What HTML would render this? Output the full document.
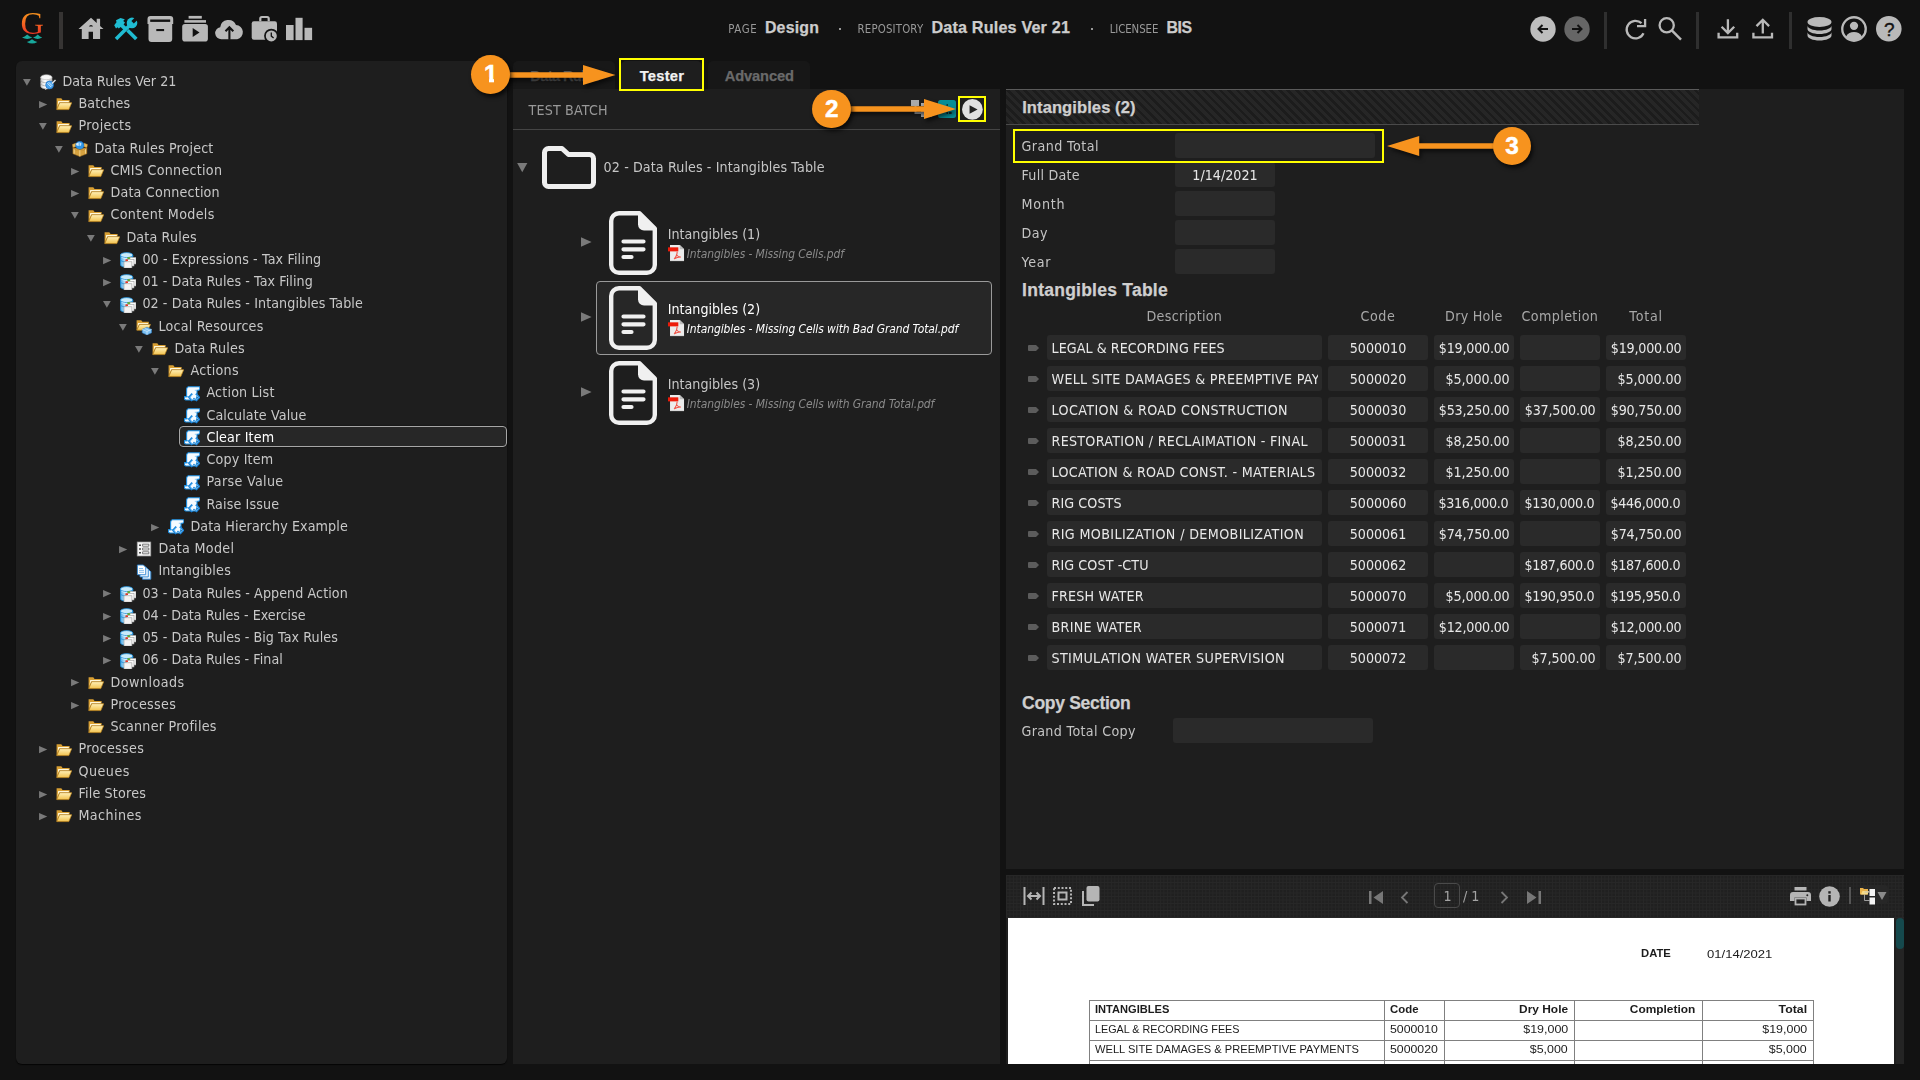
<!DOCTYPE html>
<html lang="en"><head><meta charset="utf-8"><title>Design - Data Rules Ver 21</title>
<style>
*{box-sizing:border-box;margin:0;padding:0}
html,body{width:1920px;height:1080px;overflow:hidden;background:#121212}
body{font-family:"DejaVu Sans","Liberation Sans",sans-serif;font-size:12.75px;color:#bbb;position:relative}
.abs{position:absolute}
.t{position:absolute;white-space:pre;line-height:1}
.n{transform:scaleY(1.1136)}
.i{font-style:italic}
.b{font-family:"Liberation Sans","DejaVu Sans",sans-serif;font-weight:bold;-webkit-text-stroke:.25px currentColor}
.panel{position:absolute;background:#1e1e1e}
.inp{position:absolute;background:#2a2a2a;border-radius:3px;height:25px;padding:0 4.5px;color:#e8e8e8;font-size:12.75px;line-height:26px;white-space:pre}
.inp>div{overflow:hidden;height:25px;padding-top:1px}
.inp span{display:inline-block;transform:scaleY(1.1136);transform-origin:50% 67%}
.c{text-align:center}
.r{text-align:right}
.l{text-align:left}
.circ{position:absolute;width:38px;height:38px;border-radius:50%;background:#f7931e;box-shadow:2px 3px 4px rgba(0,0,0,.7);color:#fff;text-align:center;font-family:"Liberation Sans","DejaVu Sans",sans-serif;font-weight:bold;-webkit-text-stroke:.5px #fff}
.ybox{position:absolute;border:2.5px solid #ffff00}
svg{position:absolute;overflow:visible}
.doc{font-family:"Liberation Sans",sans-serif;color:#1c1c1c;position:absolute;white-space:pre;line-height:1;font-size:11.7px}
</style></head>
<body>

<svg width="0" height="0" style="position:absolute"><defs>
<linearGradient id="gf" x1="0" y1="0" x2="0" y2="1"><stop offset="0" stop-color="#fff1b8"/><stop offset="1" stop-color="#f2c24e"/></linearGradient>
<linearGradient id="gc" x1="0" y1="0" x2="1" y2="0"><stop offset="0" stop-color="#4fa9e6"/><stop offset=".4" stop-color="#bde4f8"/><stop offset="1" stop-color="#4fa9e6"/></linearGradient>
<linearGradient id="gd" x1="0" y1="0" x2="1" y2="0"><stop offset="0" stop-color="#cfcfcf"/><stop offset=".4" stop-color="#ffffff"/><stop offset="1" stop-color="#bdbdbd"/></linearGradient>
<symbol id="i-folder" viewBox="0 0 16 16"><path d="M.6 2.300h4.700l1.300 1.600h7v2.600H3.600L.9 13.400H.6z" fill="#d89f33"/><path d="M2.200 5h10.600v1.500H3.200L1.600 10z" fill="#fff8dc"/><path d="M.8 13.600 3.700 6.700h12l-2.900 6.900z" fill="url(#gf)" stroke="#c48a1e" stroke-width=".7" stroke-linejoin="round"/></symbol>
<symbol id="i-db" viewBox="0 0 16 16"><path d="M.8 3.200v9.200c0 1.400 2.500 2.500 5.600 2.500s5.600-1.100 5.600-2.500V3.200z" fill="url(#gd)" stroke="#a9a9a9" stroke-width=".6"/><ellipse cx="6.400" cy="3.200" rx="5.600" ry="2.500" fill="#f7f7f7" stroke="#b5b5b5" stroke-width=".6"/><path d="M.8 6.300c0 1.400 2.500 2.500 5.600 2.500s5.600-1.100 5.600-2.500M.8 9.400c0 1.400 2.500 2.500 5.600 2.500s5.600-1.100 5.600-2.500" fill="none" stroke="#a0a0a0" stroke-width=".7"/><circle cx="9.600" cy="11" r="3.900" fill="#4aa5ee" stroke="#1f73c8" stroke-width=".7"/><path d="M7.400 9.200l3.800 3.800M8.600 8.200l3.600 3.600" stroke="#e3f2fe" stroke-width=".9"/><path d="M12 9.500 15.500 6" stroke="#e2e2e2" stroke-width="1.400"/><path d="M7 14.200 5.400 15.800" stroke="#dadada" stroke-width="1"/></symbol>
<symbol id="i-box" viewBox="0 0 16 16"><path d="M.900 6.600.200 3.500 3.800 2.100l1.100 3.300zM14.900 6.600l.700-3.100L12 2.100l-1.100 3.300z" fill="#e9b857" stroke="#a06f1f" stroke-width=".4"/><path d="M.900 6.600 7.800 8.600l7.100-2v6.200L7.800 15.600.900 12.800z" fill="#d6a240" stroke="#9a6a1c" stroke-width=".5" stroke-linejoin="round"/><path d="M2.200 8.200v4.400M13.500 8.200v4.400" stroke="#f3dba3" stroke-width=".8"/><path d="M7.800 8.800v6.600" stroke="#f0cf85" stroke-width="1"/><circle cx="7.800" cy="4.400" r="4.200" fill="#2e95e6" stroke="#1668b8" stroke-width=".5"/><ellipse cx="7" cy="3.200" rx="2.900" ry="1.700" fill="#e3f3ff" opacity=".9"/><path d="M7.200 2v4.600M9.200 2.400l.6 4" stroke="#2e95e6" stroke-width=".8"/><path d="M.900 6.600 4 9l3.800-.4 3.900.4 3.200-2.400-3.100 1-4 1-4-1z" fill="#e3b250" stroke="#9a6a1c" stroke-width=".4"/></symbol>
<symbol id="i-cm" viewBox="0 0 16 16"><path d="M.400 3v9.800c0 1.300 2.800 2.400 6.200 2.400s6.200-1.100 6.200-2.400V3z" fill="url(#gc)" stroke="#1a8bd8" stroke-width=".8"/><ellipse cx="6.600" cy="3.100" rx="6.200" ry="2.500" fill="#c9ebfb" stroke="#1a8bd8" stroke-width=".8"/><path d="M.400 7.600c0 1.300 2.800 2.400 6.200 2.400" fill="none" stroke="#1a8bd8" stroke-width=".8"/><path d="M1.600 5.200c1 .8 3 1.200 5 1.200s4-.4 5-1.200" fill="none" stroke="#eaf7ff" stroke-width=".8"/><rect x="8.200" y="5.400" width="7.800" height="6.600" fill="#fbfbfb" stroke="#9a9a9a" stroke-width=".6"/><rect x="6.200" y="7.500" width="7.800" height="6.500" fill="#fbfbfb" stroke="#9a9a9a" stroke-width=".6"/><rect x="4" y="9.800" width="7.900" height="6.300" fill="#f4f4f4" stroke="#9a9a9a" stroke-width=".6"/><path d="M5.400 8.200h2.600" stroke="#e8301f" stroke-width="1.500"/><path d="M7.400 6.100h2.800" stroke="#4aa516" stroke-width="1.500"/></symbol>
<symbol id="i-lres" viewBox="0 0 16 16"><path d="M.6 1.300h4.600l1.200 1.500h6.400v2.400H3.400L.9 11H.6z" fill="#d89f33"/><path d="M2 3.900h10v1.400H3L1.500 8.600z" fill="#fff8dc"/><path d="M.8 11.200 3.500 5.400h11l-2.700 5.800z" fill="url(#gf)" stroke="#c48a1e" stroke-width=".7" stroke-linejoin="round"/><path d="M6.200 10.400 11 8.200l4.600 2.200v3.400L11 16l-4.800-2.200z" fill="#7cc0f3" stroke="#2b7cc2" stroke-width=".6" stroke-linejoin="round"/><path d="M6.200 10.400 11 12.500l4.600-2.100M11 12.500V16M8.600 9.300l4.700 2.200" fill="none" stroke="#e2f1fd" stroke-width=".6"/></symbol>
<symbol id="i-script" viewBox="0 0 16 16"><path d="M4.200.700h11.300c.900 1.600.300 3.200-1.200 3.600H13v6.200L11.600 14H1.800C.500 13.500.100 12 .600 10.600h2V3.600C2.600 2 3.200 1.100 4.200.700z" fill="#f6fbff" stroke="#1b8de0" stroke-width="1.100" stroke-linejoin="round"/><path d="M.800 10.800h5.400" stroke="#1b8de0" stroke-width=".9"/><path d="M13 4.300h-2.200" stroke="#7cc3f5" stroke-width=".8"/><path d="M8.200 7.600 5.100 11.300l3.100 3.700M11.900 7.600l3.200 3.700-3.200 3.700" fill="none" stroke="#1d86dc" stroke-width="1.900" stroke-linejoin="round"/><path d="M8.200 8.600 6 11.300l2.200 2.700M11.900 8.600l2.300 2.700-2.300 2.700" fill="none" stroke="#8fd3ff" stroke-width=".7"/><circle cx="10" cy="12.600" r=".9" fill="#1d86dc"/></symbol>
<symbol id="i-dm" viewBox="0 0 16 16"><rect x="1.200" y="1" width="13.600" height="14" fill="#f6f6f6" stroke="#9a9a9a" stroke-width=".7"/><path d="M3 4.200h2M3 8h2M3 11.800h2" stroke="#4a4a4a" stroke-width="1.400"/><path d="M6.600 3.200h6.200v2H6.600zM6.600 7h6.200v2H6.600zM6.600 10.800h6.200v2H6.600z" fill="#fff" stroke="#5a5a5a" stroke-width=".8"/></symbol>
<symbol id="i-docs" viewBox="0 0 16 16"><path d="M6.500 5.500h6l2.300 2.300v7.400H6.500z" fill="#e8f3fc" stroke="#2f86d2" stroke-width=".9"/><path d="M4 3.200h6l2.300 2.300v7.400H4z" fill="#e8f3fc" stroke="#2f86d2" stroke-width=".9"/><path d="M1.400 1h6l2.300 2.300v7.400H1.400z" fill="#fff" stroke="#2f86d2" stroke-width=".9"/><path d="M3 4.500h4M3 6.400h5M3 8.300h5" stroke="#6aaee6" stroke-width=".8"/></symbol>
<symbol id="i-pdf" viewBox="0 0 16 16"><path d="M2 0h9.600L16 4.200V16H2z" fill="#ececec"/><path d="M2.300 15.700H16" stroke="#bdbdbd" stroke-width=".6"/><path d="M11.600 0v4.200H16z" fill="#bcbcbc"/><rect x="0" y="2.300" width="10.200" height="4" fill="#ee1c0a"/><path d="M6.300 13.600c1.900-2.300 2.800-4.600 2.700-6.600M8.400 9.600c.9 1.300 2.200 2.100 4 2.300M12.400 11.900c-2.200.1-4.300.700-6.100 1.700" fill="none" stroke="#f0564a" stroke-width="1.100" stroke-linecap="round"/></symbol>
<symbol id="i-docbig" viewBox="0 0 48 64"><path d="M10 2.200h20.500L45.800 17.500V54a7.800 7.800 0 0 1-7.800 7.800H10A7.800 7.800 0 0 1 2.200 54V10A7.800 7.800 0 0 1 10 2.200z" fill="none" stroke="#f0f0f0" stroke-width="4.400" stroke-linejoin="round"/><path d="M29 2.500 46 19.500H35a6 6 0 0 1-6-6z" fill="#f0f0f0"/><path d="M14.500 30.500h20M14.500 38.300h20M14.500 46h8" stroke="#f0f0f0" stroke-width="4.200" stroke-linecap="round"/></symbol>
</defs></svg>

<div class="t" style="left:20.500px;top:7.400px;font-family:'Liberation Serif',serif;font-size:32.500px;color:#f47a20;background:linear-gradient(180deg,#f7941d 18%,#ee3a24 78%);-webkit-background-clip:text;background-clip:text;-webkit-text-fill-color:transparent">G</div>
<svg style="left:0;top:0" width="60" height="50" viewBox="0 0 60 50"><path d="M22 37.600Q24.800 36.800 27.200 34.500 29.600 36.800 32.300 37.600 27.200 40.300 22 37.600zM33 37.600Q35.600 36.800 37.700 34.500 39.900 36.800 42.200 37.600 37.600 40.300 33 37.600zM26.800 42Q29.600 41.400 32 39.200 34.500 41.400 37.400 42 32.100 45 26.800 42z" fill="#18a89c"/></svg>
<div class="abs" style="left:59px;top:12px;width:3.500px;height:37px;background:#363433"></div>
<svg style="left:0;top:0" width="330" height="60" viewBox="0 0 330 60">
<path d="M91 17.800 96.700 22.900V18.800h3.400v7.100L103.500 29h-3.400v10.100H93V31.700h-4.400v7.400H81.800V29H78.500z" fill="#b9b9b9"/>
<path d="M88.900 26.600a2.200 2.200 0 0 1 4.200 0z" fill="#121212"/>
<g fill="none" stroke="#1fbcd2" stroke-width="3.600"><path d="M129.500 25.500 116 39"/><path d="M127.500 30.200 136.300 39"/></g>
<circle cx="132" cy="22.900" r="5.300" fill="#1fbcd2"/><path d="M132.600 22.300 138.500 16.400" stroke="#121212" stroke-width="3.500"/>
<path d="M114.200 25.300 116.500 22.200 116 20.200 120.500 17.900 124.800 19.300 123.200 21 125 22.600 123.600 24.400 126.600 27.300 123.800 30.100 120.600 27 118.800 28.600 117.600 27.200 116 28.400z" fill="#1fbcd2"/>
<path d="M147.500 19a3 3 0 0 1 3-3h19.700a3 3 0 0 1 3 3v5h-1v15a3 3 0 0 1-3 3h-17.700a3 3 0 0 1-3-3V24h-1z" fill="#b9b9b9"/>
<rect x="150.200" y="19.500" width="20" height="2.400" fill="#121212"/><rect x="156.300" y="29" width="7.800" height="2.100" fill="#121212"/>
<rect x="188.600" y="15.900" width="13.200" height="2.700" fill="#b9b9b9"/><rect x="184.400" y="20.100" width="21.600" height="2.600" fill="#b9b9b9"/>
<rect x="182.200" y="23.900" width="25.700" height="17.700" rx="2.800" fill="#b9b9b9"/><path d="M192.700 28 199.500 32.550 192.700 37.100z" fill="#121212"/>
<path d="M221.500 39.300a6.100 6.100 0 0 1-1.300-12.100 8.300 8.300 0 0 1 15.800-2.300 7.300 7.300 0 0 1 1.200 14.400z" fill="#b9b9b9"/>
<path d="M229.400 39.800V27.500M225.500 31.200l3.900-3.900 3.900 3.900" fill="none" stroke="#121212" stroke-width="2.100"/>
<path d="M260.300 21.200v-2.600a1.600 1.600 0 0 1 1.600-1.600h5.200a1.600 1.600 0 0 1 1.600 1.600v2.600" fill="none" stroke="#b9b9b9" stroke-width="2.200"/>
<rect x="251.700" y="21.200" width="25.300" height="18.500" rx="2.200" fill="#b9b9b9"/>
<circle cx="271.300" cy="35.900" r="7.200" fill="#121212"/><circle cx="271.300" cy="35.900" r="5.500" fill="#b9b9b9"/>
<path d="M271.300 32.400v3.700l2.300 1.900" fill="none" stroke="#121212" stroke-width="1.300"/>
<rect x="286" y="25" width="7.600" height="15.100" fill="#b9b9b9"/><rect x="295.500" y="17.800" width="7.100" height="22.300" fill="#b9b9b9"/><rect x="304.500" y="27.800" width="7.600" height="12.300" fill="#b9b9b9"/>
</svg>
<div id="f1" class="t n" style="left:728.20px;top:25.28px;font-size:10.237px;color:#999;transform-origin:0 8.62px;letter-spacing:0.632px;">PAGE</div>
<div id="f2" class="t b" style="left:764.90px;top:20.45px;font-size:15.9px;color:#ccc;letter-spacing:0.223px;">Design</div>
<div class="abs" style="left:839px;top:28px;width:2px;height:2px;background:#999"></div>
<div id="f3" class="t n" style="left:857.50px;top:25.28px;font-size:10.237px;color:#999;transform-origin:0 8.62px;letter-spacing:0.161px;">REPOSITORY</div>
<div id="f4" class="t b" style="left:931.50px;top:18.80px;font-size:16.2px;color:#ccc;letter-spacing:0.158px;">Data Rules Ver 21</div>
<div class="abs" style="left:1091px;top:28px;width:2px;height:2px;background:#999"></div>
<div id="f5" class="t n" style="left:1109.70px;top:25.28px;font-size:10.237px;color:#999;transform-origin:0 8.62px;letter-spacing:-0.092px;">LICENSEE</div>
<div id="f6" class="t b" style="left:1166.40px;top:20.45px;font-size:15.9px;color:#ccc;letter-spacing:-0.400px;">BIS</div>
<svg style="left:1530px;top:16px" width="26" height="26" viewBox="0 0 26 26"><circle cx="13" cy="13" r="12.700" fill="#bdbdbd"/><path d="M18 13H8.500M12.500 9l-4 4 4 4" fill="none" stroke="#121212" stroke-width="2"/></svg>
<svg style="left:1564px;top:16px" width="26" height="26" viewBox="0 0 26 26"><circle cx="13" cy="13" r="12.700" fill="#666"/><path d="M8 13h9.500M13.500 9l4 4-4 4" fill="none" stroke="#121212" stroke-width="2"/></svg>
<div class="abs" style="left:1604px;top:12px;width:3px;height:37px;background:#2f2f2f"></div>
<div class="abs" style="left:1696px;top:12px;width:3px;height:37px;background:#2f2f2f"></div>
<div class="abs" style="left:1789px;top:12px;width:3px;height:37px;background:#2f2f2f"></div>
<svg style="left:1600px;top:0" width="200" height="60" viewBox="1600 0 200 60"><g fill="none" stroke="#b9b9b9" stroke-width="2.300">
<path d="M1643.500 33.200A8.800 8.800 0 1 1 1641.500 23.200"/><path d="M1637 26.100H1645.100V19"/>
<circle cx="1666.700" cy="25.300" r="7.100"/><path d="M1671.800 30.400 1681 39.600" stroke-width="2.500"/>
<path d="M1727.900 19.200V33M1721.600 26.800l6.300 6.300 6.300-6.300M1718.600 32.800v4.600h18.600v-4.600"/>
<path d="M1762.800 33.600V20.200M1756.500 26.100l6.300-6.300 6.300 6.300M1753.400 32.800v4.600h18.600v-4.600"/>
</g></svg>
<svg style="left:1807px;top:17px" width="25" height="24" viewBox="0 0 25 24"><ellipse cx="12.500" cy="5" rx="12" ry="5" fill="#b9b9b9"/><path d="M.5 8.500c0 2.800 5.400 5 12 5s12-2.200 12-5v3.500c0 2.800-5.400 5-12 5s-12-2.200-12-5z" fill="#b9b9b9"/><path d="M.5 15c0 2.800 5.400 5 12 5s12-2.200 12-5v3.500c0 2.800-5.400 5-12 5s-12-2.200-12-5z" fill="#b9b9b9"/></svg>
<svg style="left:1841.400px;top:16px" width="26" height="26" viewBox="0 0 27 27"><circle cx="13.500" cy="13.500" r="12.200" fill="none" stroke="#b9b9b9" stroke-width="2.400"/><circle cx="13.500" cy="10.200" r="4.300" fill="#b9b9b9"/><path d="M5 21.500c2-3.600 5-4.800 8.500-4.800s6.500 1.200 8.500 4.800c-2.200 2.600-5 4-8.500 4s-6.300-1.400-8.500-4z" fill="#b9b9b9"/></svg>
<svg style="left:1876.200px;top:16.200px" width="25.600" height="25.600" viewBox="0 0 27 27"><circle cx="13.500" cy="13.500" r="13.500" fill="#b9b9b9"/></svg>
<div class="t" style="left:1883.900px;top:19.600px;font-family:'Liberation Sans',sans-serif;font-size:19px;color:#121212;-webkit-text-stroke:.35px #121212">?</div>
<div class="panel" style="left:16px;top:61px;width:491px;height:1003px;border-radius:6px;box-shadow:0 1px 1px #050505"></div>
<svg style="left:23.2px;top:78.90px" width="7.800" height="6.800" viewBox="0 0 8 7"><path d="M0 0h8L4 7z" fill="#7a7a7a"/></svg>
<svg style="left:40px;top:74.00px" width="16" height="16"><use href="#i-db"/></svg>
<div id="f7" class="t n" style="left:62.40px;top:76.02px;font-size:12.752px;color:#c8c8c8;transform-origin:0 10.88px;letter-spacing:-0.003px;">Data Rules Ver 21</div>
<svg style="left:38.8px;top:100.75px" width="8.300" height="7.200" viewBox="0 0 8 7"><path d="M0 0 8 3.500 0 7z" fill="#7a7a7a"/></svg>
<svg style="left:56px;top:96.25px" width="16" height="16"><use href="#i-folder"/></svg>
<div id="f8" class="t n" style="left:78.40px;top:98.02px;font-size:12.752px;color:#c8c8c8;transform-origin:0 10.88px;letter-spacing:0.110px;">Batches</div>
<svg style="left:39.2px;top:123.40px" width="7.800" height="6.800" viewBox="0 0 8 7"><path d="M0 0h8L4 7z" fill="#7a7a7a"/></svg>
<svg style="left:56px;top:118.50px" width="16" height="16"><use href="#i-folder"/></svg>
<div id="f9" class="t n" style="left:78.40px;top:120.02px;font-size:12.752px;color:#c8c8c8;transform-origin:0 10.88px;letter-spacing:0.348px;">Projects</div>
<svg style="left:55.2px;top:145.65px" width="7.800" height="6.800" viewBox="0 0 8 7"><path d="M0 0h8L4 7z" fill="#7a7a7a"/></svg>
<svg style="left:72px;top:140.75px" width="16" height="16"><use href="#i-box"/></svg>
<div id="f10" class="t n" style="left:94.40px;top:143.02px;font-size:12.752px;color:#c8c8c8;transform-origin:0 10.88px;letter-spacing:0.142px;">Data Rules Project</div>
<svg style="left:70.8px;top:167.50px" width="8.300" height="7.200" viewBox="0 0 8 7"><path d="M0 0 8 3.500 0 7z" fill="#7a7a7a"/></svg>
<svg style="left:88px;top:163.00px" width="16" height="16"><use href="#i-folder"/></svg>
<div id="f11" class="t n" style="left:110.40px;top:165.02px;font-size:12.752px;color:#c8c8c8;transform-origin:0 10.88px;letter-spacing:0.260px;">CMIS Connection</div>
<svg style="left:70.8px;top:189.75px" width="8.300" height="7.200" viewBox="0 0 8 7"><path d="M0 0 8 3.500 0 7z" fill="#7a7a7a"/></svg>
<svg style="left:88px;top:185.25px" width="16" height="16"><use href="#i-folder"/></svg>
<div id="f12" class="t n" style="left:110.40px;top:187.02px;font-size:12.752px;color:#c8c8c8;transform-origin:0 10.88px;letter-spacing:0.190px;">Data Connection</div>
<svg style="left:71.2px;top:212.40px" width="7.800" height="6.800" viewBox="0 0 8 7"><path d="M0 0h8L4 7z" fill="#7a7a7a"/></svg>
<svg style="left:88px;top:207.50px" width="16" height="16"><use href="#i-folder"/></svg>
<div id="f13" class="t n" style="left:110.40px;top:209.02px;font-size:12.752px;color:#c8c8c8;transform-origin:0 10.88px;letter-spacing:0.332px;">Content Models</div>
<svg style="left:87.2px;top:234.65px" width="7.800" height="6.800" viewBox="0 0 8 7"><path d="M0 0h8L4 7z" fill="#7a7a7a"/></svg>
<svg style="left:104px;top:229.75px" width="16" height="16"><use href="#i-folder"/></svg>
<div id="f14" class="t n" style="left:126.40px;top:232.02px;font-size:12.752px;color:#c8c8c8;transform-origin:0 10.88px;letter-spacing:0.144px;">Data Rules</div>
<svg style="left:102.8px;top:256.50px" width="8.300" height="7.200" viewBox="0 0 8 7"><path d="M0 0 8 3.500 0 7z" fill="#7a7a7a"/></svg>
<svg style="left:120px;top:252.00px" width="16" height="16"><use href="#i-cm"/></svg>
<div id="f15" class="t n" style="left:142.40px;top:254.02px;font-size:12.752px;color:#c8c8c8;transform-origin:0 10.88px;letter-spacing:0.107px;">00 - Expressions - Tax Filing</div>
<svg style="left:102.8px;top:278.75px" width="8.300" height="7.200" viewBox="0 0 8 7"><path d="M0 0 8 3.500 0 7z" fill="#7a7a7a"/></svg>
<svg style="left:120px;top:274.25px" width="16" height="16"><use href="#i-cm"/></svg>
<div id="f16" class="t n" style="left:142.40px;top:276.02px;font-size:12.752px;color:#c8c8c8;transform-origin:0 10.88px;letter-spacing:0.058px;">01 - Data Rules - Tax Filing</div>
<svg style="left:103.2px;top:301.40px" width="7.800" height="6.800" viewBox="0 0 8 7"><path d="M0 0h8L4 7z" fill="#7a7a7a"/></svg>
<svg style="left:120px;top:296.50px" width="16" height="16"><use href="#i-cm"/></svg>
<div id="f17" class="t n" style="left:142.40px;top:298.02px;font-size:12.752px;color:#c8c8c8;transform-origin:0 10.88px;letter-spacing:0.069px;">02 - Data Rules - Intangibles Table</div>
<svg style="left:119.2px;top:323.65px" width="7.800" height="6.800" viewBox="0 0 8 7"><path d="M0 0h8L4 7z" fill="#7a7a7a"/></svg>
<svg style="left:136px;top:318.75px" width="16" height="16"><use href="#i-lres"/></svg>
<div id="f18" class="t n" style="left:158.40px;top:321.02px;font-size:12.752px;color:#c8c8c8;transform-origin:0 10.88px;letter-spacing:0.192px;">Local Resources</div>
<svg style="left:135.2px;top:345.90px" width="7.800" height="6.800" viewBox="0 0 8 7"><path d="M0 0h8L4 7z" fill="#7a7a7a"/></svg>
<svg style="left:152px;top:341.00px" width="16" height="16"><use href="#i-folder"/></svg>
<div id="f19" class="t n" style="left:174.40px;top:343.02px;font-size:12.752px;color:#c8c8c8;transform-origin:0 10.88px;letter-spacing:0.144px;">Data Rules</div>
<svg style="left:151.2px;top:368.15px" width="7.800" height="6.800" viewBox="0 0 8 7"><path d="M0 0h8L4 7z" fill="#7a7a7a"/></svg>
<svg style="left:168px;top:363.25px" width="16" height="16"><use href="#i-folder"/></svg>
<div id="f20" class="t n" style="left:190.40px;top:365.02px;font-size:12.752px;color:#c8c8c8;transform-origin:0 10.88px;letter-spacing:0.270px;">Actions</div>
<svg style="left:184px;top:385.50px" width="16" height="16"><use href="#i-script"/></svg>
<div id="f21" class="t n" style="left:206.40px;top:387.02px;font-size:12.752px;color:#c8c8c8;transform-origin:0 10.88px;letter-spacing:0.172px;">Action List</div>
<svg style="left:184px;top:407.75px" width="16" height="16"><use href="#i-script"/></svg>
<div id="f22" class="t n" style="left:206.40px;top:410.02px;font-size:12.752px;color:#c8c8c8;transform-origin:0 10.88px;letter-spacing:0.091px;">Calculate Value</div>
<div class="abs" style="left:179px;top:426px;width:328px;height:21px;border:1px solid #a6a6a6;border-radius:4px;background:#272727;box-shadow:0 0 1.500px #000"></div>
<svg style="left:184px;top:430.00px" width="16" height="16"><use href="#i-script"/></svg>
<div id="f23" class="t n" style="left:206.40px;top:432.02px;font-size:12.752px;color:#fff;transform-origin:0 10.88px;letter-spacing:0.142px;">Clear Item</div>
<svg style="left:184px;top:452.25px" width="16" height="16"><use href="#i-script"/></svg>
<div id="f24" class="t n" style="left:206.40px;top:454.02px;font-size:12.752px;color:#c8c8c8;transform-origin:0 10.88px;letter-spacing:0.172px;">Copy Item</div>
<svg style="left:184px;top:474.50px" width="16" height="16"><use href="#i-script"/></svg>
<div id="f25" class="t n" style="left:206.40px;top:476.02px;font-size:12.752px;color:#c8c8c8;transform-origin:0 10.88px;letter-spacing:0.307px;">Parse Value</div>
<svg style="left:184px;top:496.75px" width="16" height="16"><use href="#i-script"/></svg>
<div id="f26" class="t n" style="left:206.40px;top:499.02px;font-size:12.752px;color:#c8c8c8;transform-origin:0 10.88px;letter-spacing:0.125px;">Raise Issue</div>
<svg style="left:150.8px;top:523.50px" width="8.300" height="7.200" viewBox="0 0 8 7"><path d="M0 0 8 3.500 0 7z" fill="#7a7a7a"/></svg>
<svg style="left:168px;top:519.00px" width="16" height="16"><use href="#i-script"/></svg>
<div id="f27" class="t n" style="left:190.40px;top:521.02px;font-size:12.752px;color:#c8c8c8;transform-origin:0 10.88px;letter-spacing:0.090px;">Data Hierarchy Example</div>
<svg style="left:118.8px;top:545.75px" width="8.300" height="7.200" viewBox="0 0 8 7"><path d="M0 0 8 3.500 0 7z" fill="#7a7a7a"/></svg>
<svg style="left:136px;top:541.25px" width="16" height="16"><use href="#i-dm"/></svg>
<div id="f28" class="t n" style="left:158.40px;top:543.02px;font-size:12.752px;color:#c8c8c8;transform-origin:0 10.88px;letter-spacing:0.324px;">Data Model</div>
<svg style="left:136px;top:563.50px" width="16" height="16"><use href="#i-docs"/></svg>
<div id="f29" class="t n" style="left:158.40px;top:565.02px;font-size:12.752px;color:#c8c8c8;transform-origin:0 10.88px;letter-spacing:0.190px;">Intangibles</div>
<svg style="left:102.8px;top:590.25px" width="8.300" height="7.200" viewBox="0 0 8 7"><path d="M0 0 8 3.500 0 7z" fill="#7a7a7a"/></svg>
<svg style="left:120px;top:585.75px" width="16" height="16"><use href="#i-cm"/></svg>
<div id="f30" class="t n" style="left:142.40px;top:588.02px;font-size:12.752px;color:#c8c8c8;transform-origin:0 10.88px;letter-spacing:0.065px;">03 - Data Rules - Append Action</div>
<svg style="left:102.8px;top:612.50px" width="8.300" height="7.200" viewBox="0 0 8 7"><path d="M0 0 8 3.500 0 7z" fill="#7a7a7a"/></svg>
<svg style="left:120px;top:608.00px" width="16" height="16"><use href="#i-cm"/></svg>
<div id="f31" class="t n" style="left:142.40px;top:610.02px;font-size:12.752px;color:#c8c8c8;transform-origin:0 10.88px;letter-spacing:-0.016px;">04 - Data Rules - Exercise</div>
<svg style="left:102.8px;top:634.75px" width="8.300" height="7.200" viewBox="0 0 8 7"><path d="M0 0 8 3.500 0 7z" fill="#7a7a7a"/></svg>
<svg style="left:120px;top:630.25px" width="16" height="16"><use href="#i-cm"/></svg>
<div id="f32" class="t n" style="left:142.40px;top:632.02px;font-size:12.752px;color:#c8c8c8;transform-origin:0 10.88px;letter-spacing:0.032px;">05 - Data Rules - Big Tax Rules</div>
<svg style="left:102.8px;top:657.00px" width="8.300" height="7.200" viewBox="0 0 8 7"><path d="M0 0 8 3.500 0 7z" fill="#7a7a7a"/></svg>
<svg style="left:120px;top:652.50px" width="16" height="16"><use href="#i-cm"/></svg>
<div id="f33" class="t n" style="left:142.40px;top:654.02px;font-size:12.752px;color:#c8c8c8;transform-origin:0 10.88px;letter-spacing:0.022px;">06 - Data Rules - Final</div>
<svg style="left:70.8px;top:679.25px" width="8.300" height="7.200" viewBox="0 0 8 7"><path d="M0 0 8 3.500 0 7z" fill="#7a7a7a"/></svg>
<svg style="left:88px;top:674.75px" width="16" height="16"><use href="#i-folder"/></svg>
<div id="f34" class="t n" style="left:110.40px;top:677.02px;font-size:12.752px;color:#c8c8c8;transform-origin:0 10.88px;letter-spacing:0.471px;">Downloads</div>
<svg style="left:70.8px;top:701.50px" width="8.300" height="7.200" viewBox="0 0 8 7"><path d="M0 0 8 3.500 0 7z" fill="#7a7a7a"/></svg>
<svg style="left:88px;top:697.00px" width="16" height="16"><use href="#i-folder"/></svg>
<div id="f35" class="t n" style="left:110.40px;top:699.02px;font-size:12.752px;color:#c8c8c8;transform-origin:0 10.88px;letter-spacing:0.318px;">Processes</div>
<svg style="left:88px;top:719.25px" width="16" height="16"><use href="#i-folder"/></svg>
<div id="f36" class="t n" style="left:110.40px;top:721.02px;font-size:12.752px;color:#c8c8c8;transform-origin:0 10.88px;letter-spacing:0.232px;">Scanner Profiles</div>
<svg style="left:38.8px;top:746.00px" width="8.300" height="7.200" viewBox="0 0 8 7"><path d="M0 0 8 3.500 0 7z" fill="#7a7a7a"/></svg>
<svg style="left:56px;top:741.50px" width="16" height="16"><use href="#i-folder"/></svg>
<div id="f37" class="t n" style="left:78.40px;top:743.02px;font-size:12.752px;color:#c8c8c8;transform-origin:0 10.88px;letter-spacing:0.318px;">Processes</div>
<svg style="left:56px;top:763.75px" width="16" height="16"><use href="#i-folder"/></svg>
<div id="f38" class="t n" style="left:78.40px;top:766.02px;font-size:12.752px;color:#c8c8c8;transform-origin:0 10.88px;letter-spacing:0.494px;">Queues</div>
<svg style="left:38.8px;top:790.50px" width="8.300" height="7.200" viewBox="0 0 8 7"><path d="M0 0 8 3.500 0 7z" fill="#7a7a7a"/></svg>
<svg style="left:56px;top:786.00px" width="16" height="16"><use href="#i-folder"/></svg>
<div id="f39" class="t n" style="left:78.40px;top:788.02px;font-size:12.752px;color:#c8c8c8;transform-origin:0 10.88px;letter-spacing:0.167px;">File Stores</div>
<svg style="left:38.8px;top:812.75px" width="8.300" height="7.200" viewBox="0 0 8 7"><path d="M0 0 8 3.500 0 7z" fill="#7a7a7a"/></svg>
<svg style="left:56px;top:808.25px" width="16" height="16"><use href="#i-folder"/></svg>
<div id="f40" class="t n" style="left:78.40px;top:810.02px;font-size:12.752px;color:#c8c8c8;transform-origin:0 10.88px;letter-spacing:0.412px;">Machines</div>
<div class="panel" style="left:513px;top:89px;width:487px;height:975px"></div>
<div class="abs" style="left:513px;top:61px;width:102px;height:28px;background:#181818;border-radius:5px 5px 0 0"></div>
<div id="f41" class="t b" style="left:530.30px;top:68.55px;font-size:14.7px;color:#555;letter-spacing:-0.658px;">Data Rules</div>
<div class="abs" style="left:708px;top:61px;width:102px;height:28px;background:#171717;border-radius:5px 5px 0 0"></div>
<div id="f42" class="t b" style="left:724.70px;top:68.55px;font-size:14.7px;color:#6a6a6a;letter-spacing:-0.129px;">Advanced</div>
<div class="abs" style="left:621px;top:61px;width:81px;height:29px;background:#1e1e1e;border-radius:5px 5px 0 0"></div>
<div id="f43" class="t b" style="left:639.70px;top:68.55px;font-size:14.7px;color:#f2f2f2;letter-spacing:0.240px;">Tester</div>
<div class="ybox" style="left:619px;top:57.800px;width:85px;height:33.400px"></div>
<div id="f44" class="t n" style="left:528.60px;top:105.02px;font-size:12.752px;color:#999;transform-origin:0 10.88px;letter-spacing:0.145px;">TEST BATCH</div>
<div class="abs" style="left:513px;top:129px;width:487px;height:1px;background:#454545"></div>
<svg style="left:911px;top:100px" width="21" height="17" viewBox="0 0 21 17"><path d="M0 0h8v6H0zM10 3h5v3h-5zM10 11h11v6H10zM3.500 6v8h6.500v-2H5.500V6z" fill="#a9a9a9"/></svg>
<div class="abs" style="left:938px;top:100px;width:18px;height:18px;background:#078e97;border-radius:2.500px"></div>
<svg style="left:938px;top:100px" width="18" height="18" viewBox="0 0 18 18"><path d="M8.500 4.200h1.500v1.600H8.500zM8.500 12h1.500v2H8.500zM11 12h2.600v2H11z" fill="#0d2a2e"/></svg>
<svg style="left:961.500px;top:98.700px" width="20.800" height="20.800" viewBox="0 0 22 22"><circle cx="11" cy="11" r="11" fill="#e0e0e0"/><path d="M8 6.500 16.500 11 8 15.500z" fill="#222"/></svg>
<div class="ybox" style="left:957.800px;top:95.800px;width:28.400px;height:26.200px"></div>
<svg style="left:516.700px;top:162.800px" width="10.500" height="9.200" viewBox="0 0 10 9"><path d="M0 0h10L5 9z" fill="#7a7a7a"/></svg>
<svg style="left:542px;top:146px" width="54" height="43" viewBox="0 0 54 43"><path d="M2.500 6.500A4 4 0 0 1 6.500 2.500h13.500l6.500 6h21A4 4 0 0 1 51.500 12.500v24A4 4 0 0 1 47.500 40.500h-41A4 4 0 0 1 2.500 36.500z" fill="none" stroke="#efefef" stroke-width="5" stroke-linejoin="round"/></svg>
<div id="f45" class="t n" style="left:603.60px;top:162.02px;font-size:12.752px;color:#c6c6c6;transform-origin:0 10.88px;letter-spacing:0.087px;">02 - Data Rules - Intangibles Table</div>
<svg style="left:580.500px;top:237.1px" width="10.600" height="10.100" viewBox="0 0 11 10"><path d="M0 0 11 5 0 10z" fill="#7a7a7a"/></svg>
<svg style="left:609px;top:211px" width="48" height="64"><use href="#i-docbig"/></svg>
<div id="f46" class="t n" style="left:667.70px;top:229.02px;font-size:12.752px;color:#c8c8c8;transform-origin:0 10.88px;letter-spacing:-0.008px;">Intangibles (1)</div>
<svg style="left:668px;top:244.7px" width="16.200" height="16.200"><use href="#i-pdf"/></svg>
<div id="f47" class="t n i" style="left:686.80px;top:250.01px;font-size:10.776px;color:#8a8a8a;transform-origin:0 8.89px;letter-spacing:-0.108px;">Intangibles - Missing Cells.pdf</div>
<div class="abs" style="left:596px;top:281px;width:396px;height:74.200px;border:1px solid #9a9a9a;border-radius:4px;background:#272727"></div>
<svg style="left:580.500px;top:312.1px" width="10.600" height="10.100" viewBox="0 0 11 10"><path d="M0 0 11 5 0 10z" fill="#7a7a7a"/></svg>
<svg style="left:609px;top:286px" width="48" height="64"><use href="#i-docbig"/></svg>
<div id="f48" class="t n" style="left:667.70px;top:304.02px;font-size:12.752px;color:#fff;transform-origin:0 10.88px;letter-spacing:-0.008px;">Intangibles (2)</div>
<svg style="left:668px;top:319.7px" width="16.200" height="16.200"><use href="#i-pdf"/></svg>
<div id="f49" class="t n i" style="left:686.80px;top:325.01px;font-size:10.776px;color:#fff;transform-origin:0 8.89px;letter-spacing:-0.097px;">Intangibles - Missing Cells with Bad Grand Total.pdf</div>
<svg style="left:580.500px;top:387.1px" width="10.600" height="10.100" viewBox="0 0 11 10"><path d="M0 0 11 5 0 10z" fill="#7a7a7a"/></svg>
<svg style="left:609px;top:361px" width="48" height="64"><use href="#i-docbig"/></svg>
<div id="f50" class="t n" style="left:667.70px;top:379.02px;font-size:12.752px;color:#c8c8c8;transform-origin:0 10.88px;letter-spacing:-0.008px;">Intangibles (3)</div>
<svg style="left:668px;top:394.7px" width="16.200" height="16.200"><use href="#i-pdf"/></svg>
<div id="f51" class="t n i" style="left:686.80px;top:400.01px;font-size:10.776px;color:#8a8a8a;transform-origin:0 8.89px;letter-spacing:-0.098px;">Intangibles - Missing Cells with Grand Total.pdf</div>
<div class="panel" style="left:1006px;top:89px;width:898px;height:780px"></div>
<div class="abs" style="left:1006px;top:89px;width:693px;height:36px;border-top:1px solid #5a5a5a;border-bottom:1px solid #4a4a4a;background:repeating-linear-gradient(45deg,#1c1c1c 0,#1c1c1c 2.600px,#262626 2.600px,#262626 6px)"></div>
<div id="f52" class="t b" style="left:1022.20px;top:100.12px;font-size:16.56px;color:#cfcfcf;letter-spacing:0.081px;">Intangibles (2)</div>
<div id="f53" class="t n" style="left:1021.50px;top:141.02px;font-size:12.752px;color:#c4c4c4;transform-origin:0 10.88px;letter-spacing:0.405px;">Grand Total</div>
<div class="inp c" style="left:1175px;top:133px;width:200px;"></div>
<div id="f54" class="t n" style="left:1021.50px;top:170.02px;font-size:12.752px;color:#c4c4c4;transform-origin:0 10.88px;letter-spacing:0.207px;">Full Date</div>
<div class="inp c" style="left:1175px;top:162px;width:100px;"><div><span>1/14/2021</span></div></div>
<div id="f55" class="t n" style="left:1021.50px;top:199.02px;font-size:12.752px;color:#c4c4c4;transform-origin:0 10.88px;letter-spacing:0.800px;">Month</div>
<div class="inp c" style="left:1175px;top:191px;width:100px;"></div>
<div id="f56" class="t n" style="left:1021.50px;top:228.02px;font-size:12.752px;color:#c4c4c4;transform-origin:0 10.88px;letter-spacing:0.406px;">Day</div>
<div class="inp c" style="left:1175px;top:220px;width:100px;"></div>
<div id="f57" class="t n" style="left:1021.50px;top:257.02px;font-size:12.752px;color:#c4c4c4;transform-origin:0 10.88px;letter-spacing:0.667px;">Year</div>
<div class="inp c" style="left:1175px;top:249px;width:100px;"></div>
<div class="ybox" style="left:1012.900px;top:128.700px;width:371.500px;height:34.300px"></div>
<div id="f58" class="t b" style="left:1022.10px;top:282.15px;font-size:17.5px;color:#cfcfcf;letter-spacing:0.247px;">Intangibles Table</div>
<div id="f59" class="t n" style="left:1146.50px;top:311.02px;font-size:12.752px;color:#a8a8a8;transform-origin:0 10.88px;letter-spacing:0.278px;">Description</div>
<div id="f60" class="t n" style="left:1360.50px;top:311.02px;font-size:12.752px;color:#a8a8a8;transform-origin:0 10.88px;letter-spacing:0.581px;">Code</div>
<div id="f61" class="t n" style="left:1445.10px;top:311.02px;font-size:12.752px;color:#a8a8a8;transform-origin:0 10.88px;letter-spacing:0.252px;">Dry Hole</div>
<div id="f62" class="t n" style="left:1521.50px;top:311.02px;font-size:12.752px;color:#a8a8a8;transform-origin:0 10.88px;letter-spacing:0.374px;">Completion</div>
<div id="f63" class="t n" style="left:1629.25px;top:311.02px;font-size:12.752px;color:#a8a8a8;transform-origin:0 10.88px;letter-spacing:0.780px;">Total</div>
<svg style="left:1027.500px;top:345px" width="11" height="6" viewBox="0 0 11 6"><path d="M1 0h7l3 3-3 3H1a1 1 0 0 1-1-1V1a1 1 0 0 1 1-1z" fill="#5c5c5c"/></svg>
<div class="inp l" style="left:1047px;top:335px;width:275px"><div><span id="f64" style="transform-origin:0 67%;letter-spacing:0.042px;">LEGAL &amp; RECORDING FEES</span></div></div>
<div class="inp c" style="left:1328px;top:335px;width:100px"><div><span id="f65" style="transform-origin:50% 67%;letter-spacing:-0.049px;">5000010</span></div></div>
<div class="inp r" style="left:1434px;top:335px;width:80px"><div><span id="f66" style="transform-origin:100% 67%;letter-spacing:-0.235px;">$19,000.00</span></div></div>
<div class="inp" style="left:1520px;top:335px;width:80px"></div>
<div class="inp r" style="left:1606px;top:335px;width:80px"><div><span id="f67" style="transform-origin:100% 67%;letter-spacing:-0.235px;">$19,000.00</span></div></div>
<svg style="left:1027.500px;top:376px" width="11" height="6" viewBox="0 0 11 6"><path d="M1 0h7l3 3-3 3H1a1 1 0 0 1-1-1V1a1 1 0 0 1 1-1z" fill="#5c5c5c"/></svg>
<div class="inp l" style="left:1047px;top:366px;width:275px"><div><span id="f68" style="transform-origin:0 67%;letter-spacing:0.285px;">WELL SITE DAMAGES &amp; PREEMPTIVE PAYMENTS</span></div></div>
<div class="inp c" style="left:1328px;top:366px;width:100px"><div><span id="f69" style="transform-origin:50% 67%;letter-spacing:-0.049px;">5000020</span></div></div>
<div class="inp r" style="left:1434px;top:366px;width:80px"><div><span id="f70" style="transform-origin:100% 67%;letter-spacing:-0.086px;">$5,000.00</span></div></div>
<div class="inp" style="left:1520px;top:366px;width:80px"></div>
<div class="inp r" style="left:1606px;top:366px;width:80px"><div><span id="f71" style="transform-origin:100% 67%;letter-spacing:-0.086px;">$5,000.00</span></div></div>
<svg style="left:1027.500px;top:407px" width="11" height="6" viewBox="0 0 11 6"><path d="M1 0h7l3 3-3 3H1a1 1 0 0 1-1-1V1a1 1 0 0 1 1-1z" fill="#5c5c5c"/></svg>
<div class="inp l" style="left:1047px;top:397px;width:275px"><div><span id="f72" style="transform-origin:0 67%;letter-spacing:0.362px;">LOCATION &amp; ROAD CONSTRUCTION</span></div></div>
<div class="inp c" style="left:1328px;top:397px;width:100px"><div><span id="f73" style="transform-origin:50% 67%;letter-spacing:-0.049px;">5000030</span></div></div>
<div class="inp r" style="left:1434px;top:397px;width:80px"><div><span id="f74" style="transform-origin:100% 67%;letter-spacing:-0.235px;">$53,250.00</span></div></div>
<div class="inp r" style="left:1520px;top:397px;width:80px"><div><span id="f75" style="transform-origin:100% 67%;letter-spacing:-0.235px;">$37,500.00</span></div></div>
<div class="inp r" style="left:1606px;top:397px;width:80px"><div><span id="f76" style="transform-origin:100% 67%;letter-spacing:-0.235px;">$90,750.00</span></div></div>
<svg style="left:1027.500px;top:438px" width="11" height="6" viewBox="0 0 11 6"><path d="M1 0h7l3 3-3 3H1a1 1 0 0 1-1-1V1a1 1 0 0 1 1-1z" fill="#5c5c5c"/></svg>
<div class="inp l" style="left:1047px;top:428px;width:275px"><div><span id="f77" style="transform-origin:0 67%;letter-spacing:0.268px;">RESTORATION / RECLAIMATION - FINAL</span></div></div>
<div class="inp c" style="left:1328px;top:428px;width:100px"><div><span id="f78" style="transform-origin:50% 67%;letter-spacing:-0.049px;">5000031</span></div></div>
<div class="inp r" style="left:1434px;top:428px;width:80px"><div><span id="f79" style="transform-origin:100% 67%;letter-spacing:-0.086px;">$8,250.00</span></div></div>
<div class="inp" style="left:1520px;top:428px;width:80px"></div>
<div class="inp r" style="left:1606px;top:428px;width:80px"><div><span id="f80" style="transform-origin:100% 67%;letter-spacing:-0.086px;">$8,250.00</span></div></div>
<svg style="left:1027.500px;top:469px" width="11" height="6" viewBox="0 0 11 6"><path d="M1 0h7l3 3-3 3H1a1 1 0 0 1-1-1V1a1 1 0 0 1 1-1z" fill="#5c5c5c"/></svg>
<div class="inp l" style="left:1047px;top:459px;width:275px"><div><span id="f81" style="transform-origin:0 67%;letter-spacing:0.273px;">LOCATION &amp; ROAD CONST. - MATERIALS</span></div></div>
<div class="inp c" style="left:1328px;top:459px;width:100px"><div><span id="f82" style="transform-origin:50% 67%;letter-spacing:-0.049px;">5000032</span></div></div>
<div class="inp r" style="left:1434px;top:459px;width:80px"><div><span id="f83" style="transform-origin:100% 67%;letter-spacing:-0.086px;">$1,250.00</span></div></div>
<div class="inp" style="left:1520px;top:459px;width:80px"></div>
<div class="inp r" style="left:1606px;top:459px;width:80px"><div><span id="f84" style="transform-origin:100% 67%;letter-spacing:-0.086px;">$1,250.00</span></div></div>
<svg style="left:1027.500px;top:500px" width="11" height="6" viewBox="0 0 11 6"><path d="M1 0h7l3 3-3 3H1a1 1 0 0 1-1-1V1a1 1 0 0 1 1-1z" fill="#5c5c5c"/></svg>
<div class="inp l" style="left:1047px;top:490px;width:275px"><div><span id="f85" style="transform-origin:0 67%;letter-spacing:0.066px;">RIG COSTS</span></div></div>
<div class="inp c" style="left:1328px;top:490px;width:100px"><div><span id="f86" style="transform-origin:50% 67%;letter-spacing:-0.049px;">5000060</span></div></div>
<div class="inp l" style="left:1434px;top:490px;width:80px"><div style="width:69.400px"><span id="f87" style="transform-origin:0 67%;letter-spacing:-0.322px;">$316,000.00</span></div></div>
<div class="inp l" style="left:1520px;top:490px;width:80px"><div style="width:69.400px"><span id="f88" style="transform-origin:0 67%;letter-spacing:-0.322px;">$130,000.00</span></div></div>
<div class="inp l" style="left:1606px;top:490px;width:80px"><div style="width:69.400px"><span id="f89" style="transform-origin:0 67%;letter-spacing:-0.322px;">$446,000.00</span></div></div>
<svg style="left:1027.500px;top:531px" width="11" height="6" viewBox="0 0 11 6"><path d="M1 0h7l3 3-3 3H1a1 1 0 0 1-1-1V1a1 1 0 0 1 1-1z" fill="#5c5c5c"/></svg>
<div class="inp l" style="left:1047px;top:521px;width:275px"><div><span id="f90" style="transform-origin:0 67%;letter-spacing:0.355px;">RIG MOBILIZATION / DEMOBILIZATION</span></div></div>
<div class="inp c" style="left:1328px;top:521px;width:100px"><div><span id="f91" style="transform-origin:50% 67%;letter-spacing:-0.049px;">5000061</span></div></div>
<div class="inp r" style="left:1434px;top:521px;width:80px"><div><span id="f92" style="transform-origin:100% 67%;letter-spacing:-0.235px;">$74,750.00</span></div></div>
<div class="inp" style="left:1520px;top:521px;width:80px"></div>
<div class="inp r" style="left:1606px;top:521px;width:80px"><div><span id="f93" style="transform-origin:100% 67%;letter-spacing:-0.235px;">$74,750.00</span></div></div>
<svg style="left:1027.500px;top:562px" width="11" height="6" viewBox="0 0 11 6"><path d="M1 0h7l3 3-3 3H1a1 1 0 0 1-1-1V1a1 1 0 0 1 1-1z" fill="#5c5c5c"/></svg>
<div class="inp l" style="left:1047px;top:552px;width:275px"><div><span id="f94" style="transform-origin:0 67%;letter-spacing:0.078px;">RIG COST -CTU</span></div></div>
<div class="inp c" style="left:1328px;top:552px;width:100px"><div><span id="f95" style="transform-origin:50% 67%;letter-spacing:-0.049px;">5000062</span></div></div>
<div class="inp" style="left:1434px;top:552px;width:80px"></div>
<div class="inp l" style="left:1520px;top:552px;width:80px"><div style="width:69.400px"><span id="f96" style="transform-origin:0 67%;letter-spacing:-0.322px;">$187,600.00</span></div></div>
<div class="inp l" style="left:1606px;top:552px;width:80px"><div style="width:69.400px"><span id="f97" style="transform-origin:0 67%;letter-spacing:-0.322px;">$187,600.00</span></div></div>
<svg style="left:1027.500px;top:593px" width="11" height="6" viewBox="0 0 11 6"><path d="M1 0h7l3 3-3 3H1a1 1 0 0 1-1-1V1a1 1 0 0 1 1-1z" fill="#5c5c5c"/></svg>
<div class="inp l" style="left:1047px;top:583px;width:275px"><div><span id="f98" style="transform-origin:0 67%;letter-spacing:0.177px;">FRESH WATER</span></div></div>
<div class="inp c" style="left:1328px;top:583px;width:100px"><div><span id="f99" style="transform-origin:50% 67%;letter-spacing:-0.049px;">5000070</span></div></div>
<div class="inp r" style="left:1434px;top:583px;width:80px"><div><span id="f100" style="transform-origin:100% 67%;letter-spacing:-0.086px;">$5,000.00</span></div></div>
<div class="inp l" style="left:1520px;top:583px;width:80px"><div style="width:69.400px"><span id="f101" style="transform-origin:0 67%;letter-spacing:-0.322px;">$190,950.00</span></div></div>
<div class="inp l" style="left:1606px;top:583px;width:80px"><div style="width:69.400px"><span id="f102" style="transform-origin:0 67%;letter-spacing:-0.322px;">$195,950.00</span></div></div>
<svg style="left:1027.500px;top:624px" width="11" height="6" viewBox="0 0 11 6"><path d="M1 0h7l3 3-3 3H1a1 1 0 0 1-1-1V1a1 1 0 0 1 1-1z" fill="#5c5c5c"/></svg>
<div class="inp l" style="left:1047px;top:614px;width:275px"><div><span id="f103" style="transform-origin:0 67%;letter-spacing:0.284px;">BRINE WATER</span></div></div>
<div class="inp c" style="left:1328px;top:614px;width:100px"><div><span id="f104" style="transform-origin:50% 67%;letter-spacing:-0.049px;">5000071</span></div></div>
<div class="inp r" style="left:1434px;top:614px;width:80px"><div><span id="f105" style="transform-origin:100% 67%;letter-spacing:-0.235px;">$12,000.00</span></div></div>
<div class="inp" style="left:1520px;top:614px;width:80px"></div>
<div class="inp r" style="left:1606px;top:614px;width:80px"><div><span id="f106" style="transform-origin:100% 67%;letter-spacing:-0.235px;">$12,000.00</span></div></div>
<svg style="left:1027.500px;top:655px" width="11" height="6" viewBox="0 0 11 6"><path d="M1 0h7l3 3-3 3H1a1 1 0 0 1-1-1V1a1 1 0 0 1 1-1z" fill="#5c5c5c"/></svg>
<div class="inp l" style="left:1047px;top:645px;width:275px"><div><span id="f107" style="transform-origin:0 67%;letter-spacing:0.328px;">STIMULATION WATER SUPERVISION</span></div></div>
<div class="inp c" style="left:1328px;top:645px;width:100px"><div><span id="f108" style="transform-origin:50% 67%;letter-spacing:-0.049px;">5000072</span></div></div>
<div class="inp" style="left:1434px;top:645px;width:80px"></div>
<div class="inp r" style="left:1520px;top:645px;width:80px"><div><span id="f109" style="transform-origin:100% 67%;letter-spacing:-0.086px;">$7,500.00</span></div></div>
<div class="inp r" style="left:1606px;top:645px;width:80px"><div><span id="f110" style="transform-origin:100% 67%;letter-spacing:-0.086px;">$7,500.00</span></div></div>
<div id="f111" class="t b" style="left:1022.10px;top:695.15px;font-size:17.5px;color:#cfcfcf;letter-spacing:-0.303px;">Copy Section</div>
<div id="f112" class="t n" style="left:1021.50px;top:726.02px;font-size:12.752px;color:#c4c4c4;transform-origin:0 10.88px;letter-spacing:0.310px;">Grand Total Copy</div>
<div class="inp c" style="left:1173px;top:718px;width:200px;"></div>
<div class="abs" style="left:1006px;top:875px;width:898px;height:189px;background:#1f1f1f"></div>
<div class="abs" style="left:1006px;top:875px;width:898px;height:43px;background-color:#202020;background-image:linear-gradient(#272727 1px,transparent 1px),linear-gradient(90deg,#272727 1px,transparent 1px);background-size:3.500px 3.500px"></div>
<div class="abs" style="left:1007.800px;top:918.400px;width:886.200px;height:145.600px;background:#fff"></div>
<div class="abs" style="left:1896px;top:918px;width:8px;height:146px;background:#242424"></div>
<div class="abs" style="left:1896px;top:918px;width:8px;height:31px;background:#15494d;border-radius:4px"></div>
<svg style="left:1023px;top:887px" width="22" height="18" viewBox="0 0 22 18"><path d="M1.500 0v18M20.500 0v18" stroke="#b5b5b5" stroke-width="2"/><path d="M5 9h12M8.500 5.500 5 9l3.500 3.500M13.500 5.500 17 9l-3.500 3.500" fill="none" stroke="#b5b5b5" stroke-width="2"/></svg>
<svg style="left:1053px;top:887px" width="19" height="18" viewBox="0 0 19 18"><rect x="1" y="1" width="17" height="16" fill="none" stroke="#b5b5b5" stroke-width="2" stroke-dasharray="2 1.750"/><rect x="5.500" y="5.500" width="8" height="7" fill="none" stroke="#b5b5b5" stroke-width="2"/></svg>
<svg style="left:1082px;top:886px" width="18" height="20" viewBox="0 0 18 20"><rect x="4.500" y="0" width="13" height="15.500" rx="2" fill="#b5b5b5"/><path d="M1 5v14h11" fill="none" stroke="#b5b5b5" stroke-width="2"/></svg>
<svg style="left:1369px;top:890.500px" width="14" height="13" viewBox="0 0 14 13"><rect x="0" y="0" width="2.500" height="13" fill="#777"/><path d="M14 0v13L4.500 6.500z" fill="#777"/></svg>
<svg style="left:1400px;top:890.500px" width="9" height="13" viewBox="0 0 9 13"><path d="M7.500 1 2 6.500 7.500 12" fill="none" stroke="#777" stroke-width="1.800"/></svg>
<div class="abs" style="left:1434px;top:883px;width:26px;height:25px;border:1px solid #4a4a4a;border-radius:4px"></div>
<div class="t n" style="left:1443.40px;top:891.02px;font-size:12.752px;color:#a4a4a4;transform-origin:0 10.88px;">1</div>
<div class="t n" style="left:1462.90px;top:891.02px;font-size:12.752px;color:#a4a4a4;transform-origin:0 10.88px;">/ 1</div>
<svg style="left:1500px;top:890.500px" width="9" height="13" viewBox="0 0 9 13"><path d="M1.500 1 7 6.500 1.500 12" fill="none" stroke="#777" stroke-width="1.800"/></svg>
<svg style="left:1527px;top:890.500px" width="14" height="13" viewBox="0 0 14 13"><rect x="11.500" y="0" width="2.500" height="13" fill="#777"/><path d="M0 0v13l9.500-6.500z" fill="#777"/></svg>
<svg style="left:1790px;top:887px" width="21" height="18" viewBox="0 0 21 18"><rect x="4.500" y="0" width="12" height="3.500" fill="#b5b5b5"/><path d="M3 5h15a3 3 0 0 1 3 3v6h-4.500v-3.500h-12V14H0V8a3 3 0 0 1 3-3z" fill="#b5b5b5"/><rect x="5.500" y="11.500" width="10" height="6" fill="none" stroke="#b5b5b5" stroke-width="1.800"/><circle cx="17.300" cy="8.300" r="1" fill="#222"/></svg>
<svg style="left:1818.500px;top:885.500px" width="21" height="21" viewBox="0 0 21 21"><circle cx="10.500" cy="10.500" r="10.300" fill="#b5b5b5"/><rect x="9.300" y="9" width="2.400" height="6.500" fill="#222"/><rect x="9.300" y="5.200" width="2.400" height="2.400" fill="#222"/></svg>
<div class="abs" style="left:1849px;top:887px;width:1.500px;height:17px;background:#555"></div>
<div class="abs" style="left:1860px;top:885px;width:28px;height:19px;background:#272727;border-radius:4px"></div>
<svg style="left:1860px;top:887px" width="27" height="18" viewBox="0 0 27 18"><path d="M0 1h3l1 1h4v5.500H0z" fill="#e9b24a"/><path d="M1 7.500 2.500 4h6.500L7.500 7.500z" fill="#f8dc8a"/><path d="M4.500 7.500v6h5M4.500 5h5" fill="none" stroke="#bbb" stroke-width=".8"/><rect x="9.500" y="2" width="5.500" height="7" fill="#f4f4f4"/><rect x="9.500" y="10.500" width="5.500" height="7" fill="#f4f4f4"/><path d="M17.500 5h9l-4.500 8z" fill="#8a8a8a"/></svg>
<div id="f113" class="doc" style="left:1641.40px;top:946.55px;transform-origin:0 50%;font-size:11.7px;font-weight:bold;transform:scaleX(0.9627);">DATE</div>
<div id="f114" class="doc" style="left:1706.70px;top:947.55px;transform-origin:0 50%;font-size:11.7px;transform:scaleX(1.1179);">01/14/2021</div>
<div class="abs" style="left:1089px;top:1000px;width:725px;height:1px;background:#808080"></div>
<div class="abs" style="left:1089px;top:1020px;width:725px;height:1px;background:#808080"></div>
<div class="abs" style="left:1089px;top:1040px;width:725px;height:1px;background:#808080"></div>
<div class="abs" style="left:1089px;top:1060px;width:725px;height:1px;background:#808080"></div>
<div class="abs" style="left:1089px;top:1000px;width:1px;height:64px;background:#808080"></div>
<div class="abs" style="left:1384px;top:1000px;width:1px;height:64px;background:#808080"></div>
<div class="abs" style="left:1444px;top:1000px;width:1px;height:64px;background:#808080"></div>
<div class="abs" style="left:1574px;top:1000px;width:1px;height:64px;background:#808080"></div>
<div class="abs" style="left:1702px;top:1000px;width:1px;height:64px;background:#808080"></div>
<div class="abs" style="left:1813px;top:1000px;width:1px;height:64px;background:#808080"></div>
<div id="f115" class="doc" style="left:1094.80px;top:1002.55px;transform-origin:0 50%;font-size:11.7px;font-weight:bold;transform:scaleX(0.9495);">INTANGIBLES</div>
<div id="f116" class="doc" style="left:1389.80px;top:1002.55px;transform-origin:0 50%;font-size:11.7px;font-weight:bold;transform:scaleX(0.9754);">Code</div>
<div id="f117" class="doc" style="right:351.90px;top:1002.55px;transform-origin:100% 50%;font-size:11.7px;font-weight:bold;transform:scaleX(1.0192);">Dry Hole</div>
<div id="f118" class="doc" style="right:224.90px;top:1002.55px;transform-origin:100% 50%;font-size:11.7px;font-weight:bold;transform:scaleX(1.0190);">Completion</div>
<div id="f119" class="doc" style="right:112.90px;top:1002.55px;transform-origin:100% 50%;font-size:11.7px;font-weight:bold;transform:scaleX(1.0531);">Total</div>
<div id="f120" class="doc" style="left:1094.80px;top:1022.55px;transform-origin:0 50%;font-size:11.7px;transform:scaleX(0.9219);">LEGAL &amp; RECORDING FEES</div>
<div id="f121" class="doc" style="left:1389.80px;top:1022.55px;transform-origin:0 50%;font-size:11.7px;transform:scaleX(1.0524);">5000010</div>
<div id="f122" class="doc" style="right:351.90px;top:1022.55px;transform-origin:100% 50%;font-size:11.7px;transform:scaleX(1.0651);">$19,000</div>
<div id="f123" class="doc" style="right:112.90px;top:1022.55px;transform-origin:100% 50%;font-size:11.7px;transform:scaleX(1.0651);">$19,000</div>
<div id="f124" class="doc" style="left:1094.80px;top:1042.55px;transform-origin:0 50%;font-size:11.7px;transform:scaleX(0.9505);">WELL SITE DAMAGES &amp; PREEMPTIVE PAYMENTS</div>
<div id="f125" class="doc" style="left:1389.80px;top:1042.55px;transform-origin:0 50%;font-size:11.7px;transform:scaleX(1.0524);">5000020</div>
<div id="f126" class="doc" style="right:351.90px;top:1042.55px;transform-origin:100% 50%;font-size:11.7px;transform:scaleX(1.0629);">$5,000</div>
<div id="f127" class="doc" style="right:112.90px;top:1042.55px;transform-origin:100% 50%;font-size:11.7px;transform:scaleX(1.0629);">$5,000</div>
<svg style="left:0;top:0;filter:drop-shadow(2px 3px 2px rgba(0,0,0,.6))" width="1920" height="1080"><path d="M505 72.2H583V65L615.5 75L583 85V77.8H505z" fill="#f7931e"/></svg>
<svg style="left:0;top:0;filter:drop-shadow(2px 3px 2px rgba(0,0,0,.6))" width="1920" height="1080"><path d="M846 106.15H924V99L956 109L924 119V111.85H846z" fill="#f7931e"/></svg>
<svg style="left:0;top:0;filter:drop-shadow(2px 3px 2px rgba(0,0,0,.6))" width="1920" height="1080"><path d="M1500 143.3H1419.2V136L1387 146L1419.2 156V148.7H1500z" fill="#f7931e"/></svg>
<div class="circ" style="left:471.40px;top:55.40px;width:38.8px;height:38.8px;font-size:24.3px;line-height:38.8px">1</div>
<div class="abs" style="left:482px;top:77px;width:6.900px;height:7px;background:#f7931e"></div>
<div class="abs" style="left:494.200px;top:77px;width:6px;height:7px;background:#f7931e"></div>
<div class="circ" style="left:812.40px;top:89.55px;width:38.8px;height:38.8px;font-size:24.3px;line-height:38.8px">2</div>
<div class="circ" style="left:1492.50px;top:126.60px;width:38.8px;height:38.8px;font-size:24.3px;line-height:38.8px">3</div>

</body></html>
